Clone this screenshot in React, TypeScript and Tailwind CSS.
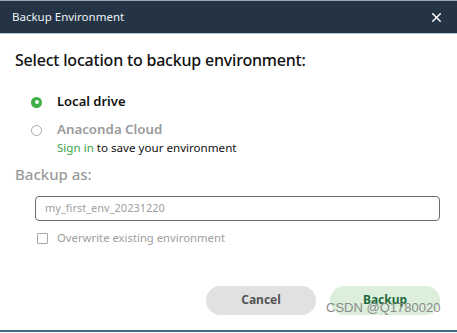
import { X } from 'lucide-react';

export default function App() {
  return (
    <div
      className="relative w-[457px] h-[333px] bg-white overflow-hidden"
      style={{ fontFamily: '"Noto Sans", "Open Sans", sans-serif' }}
    >
      {/* strip of the window behind */}
      <div className="h-px bg-[#9aa4ad]" />

      {/* title bar */}
      <div className="h-[33px] bg-[#243444] flex items-center justify-between pl-3 pr-[13px] border-b border-[#a9c7d6]">
        <span className="text-[11.5px] text-[#eef2f5]">Backup Environment</span>
        <X className="w-[15px] h-[15px] text-white" strokeWidth={2.2} />
      </div>

      <div className="px-[15px] pt-[16px]">
        <div className="text-[16px] font-medium text-[#111] leading-[20px] tracking-[-0.2px]">
          Select location to backup environment:
        </div>

        {/* options */}
        <div className="pl-[16px] pt-[22px] flex flex-col">
          <div className="flex items-center gap-[15px] h-[20px]">
            <span className="w-[11px] h-[11px] rounded-full bg-[#3daf45] flex items-center justify-center">
              <span className="w-[4px] h-[4px] rounded-full bg-white" />
            </span>
            <span className="text-[13px] font-semibold text-[#111]">Local drive</span>
          </div>
          <div className="flex items-center gap-[15px] h-[20px] mt-[8px]">
            <span className="w-[11px] h-[11px] rounded-full border border-[#a8a8a8]" />
            <span className="text-[13.3px] font-semibold text-[#9a9a9a]">Anaconda Cloud</span>
          </div>
          <div className="pl-[26px] text-[11.6px] leading-[15px] text-[#111]">
            <span className="text-[#3aa546]">Sign in</span> to save your environment
          </div>
        </div>

        <div className="mt-[9px] text-[15px] font-medium text-[#9a9a9a] leading-[20px]">Backup as:</div>

        <div className="pl-[20px] pt-[12px]">
          <div className="h-[25px] w-[405px] rounded-[4px] border border-[#6e6e6e] flex items-center px-[9px]">
            <span className="text-[11px] text-[#a0a0a0]">my_first_env_20231220</span>
          </div>
          <div className="flex items-center gap-[9px] mt-[9px] pl-[2px]">
            <span className="w-[11px] h-[11px] border border-[#a8a8a8] rounded-[1px]" />
            <span className="text-[11.3px] text-[#a0a0a0]">Overwrite existing environment</span>
          </div>
        </div>

        <div className="flex justify-end gap-[14px] pr-[2px] mt-[39px]">
          <button className="w-[110px] h-[29px] rounded-full bg-[#e1e1e1] text-[12px] font-bold text-[#555]">
            Cancel
          </button>
          <button className="w-[110px] h-[29px] rounded-full bg-[#dcefdc] text-[12px] font-bold text-[#1f6a3b]">
            Backup
          </button>
        </div>
      </div>

      {/* watermark */}
      <div
        className="absolute left-[326px] top-[299px] text-[13px] text-[#8a8a8a] leading-[18px]"
        style={{ fontFamily: '"Liberation Sans", Arial, sans-serif' }}
      >
        CSDN @Q1780020
      </div>

      <div className="absolute left-0 right-0 bottom-[1px] h-[2px] bg-[#3f6a86]" />
    </div>
  );
}
